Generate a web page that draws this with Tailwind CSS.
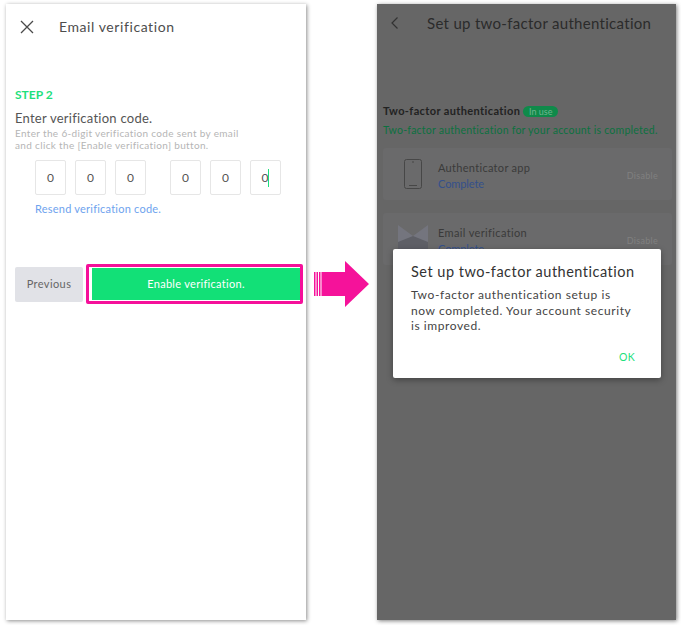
<!DOCTYPE html>
<html lang="en">
<head>
  <meta charset="UTF-8">
  <title>Two-factor authentication setup</title>
  <script src="https://cdn.jsdelivr.net/npm/@tailwindcss/browser@4"></script>
</head>
<body class="bg-white w-[681px] h-[625px] overflow-hidden font-['Lato',sans-serif]">
  <div class="flex pl-[6px] pt-[4px]">

    <!-- left phone -->
    <section class="w-[300px] h-[616px] bg-white shadow-[1px_1px_4px_rgba(0,0,0,0.45)] shrink-0">
      <header class="flex items-center h-[45px] pl-[14px] pt-[1px]">
        <svg class="w-[14px] h-[14px]" viewBox="0 0 14 14" fill="none" stroke="#4a4a4a" stroke-width="1.3"><path d="M1 1l12 12M13 1L1 13"/></svg>
        <h1 class="ml-[25px] text-[14px] leading-none tracking-[0.58px] text-[#4d4d4d]">Email verification</h1>
      </header>
      <div class="pl-[9px] pt-[39px]">
        <p class="text-[12px] leading-[14px] font-bold text-[#1ee07c]">STEP 2</p>
        <p class="mt-[8px] text-[13px] leading-[16px] tracking-[0.25px] text-[#555]">Enter verification code.</p>
        <p class="mt-[1px] text-[10px] leading-[12px] tracking-[0.34px] text-[#b5b5b5]">Enter the 6-digit verification code sent by email<br>and click the [Enable verification] button.</p>
        <div class="flex mt-[9px] ml-[20px]">
          <div class="flex gap-[9px]">
            <span class="w-[31px] h-[35px] flex items-center justify-center border border-[#e6e6e6] rounded-[2px] text-[12px] text-[#555]">0</span>
            <span class="w-[31px] h-[35px] flex items-center justify-center border border-[#e6e6e6] rounded-[2px] text-[12px] text-[#555]">0</span>
            <span class="w-[31px] h-[35px] flex items-center justify-center border border-[#e6e6e6] rounded-[2px] text-[12px] text-[#555]">0</span>
          </div>
          <div class="flex gap-[9px] ml-[24px]">
            <span class="w-[31px] h-[35px] flex items-center justify-center border border-[#e6e6e6] rounded-[2px] text-[12px] text-[#555]">0</span>
            <span class="w-[31px] h-[35px] flex items-center justify-center border border-[#e6e6e6] rounded-[2px] text-[12px] text-[#555]">0</span>
            <span class="w-[31px] h-[35px] flex items-center justify-center border border-[#e6e6e6] rounded-[2px] text-[12px] text-[#555]">0<i class="w-px h-[18px] bg-[#1ee07c]"></i></span>
          </div>
        </div>
        <a class="block mt-[7px] ml-[20px] text-[11px] leading-[14px] tracking-[0.22px] text-[#6ea3ee]">Resend verification code.</a>
        <div class="flex items-center mt-[48px]">
          <button class="w-[68px] h-[35px] bg-[#e1e2e7] rounded-[2px] text-[11px] tracking-[0.4px] text-[#666]">Previous</button>
          <div class="ml-[3px] w-[217px] h-[40px] border-[3px] border-[#f5109a] rounded-[2px] bg-white pl-[3px] py-[1px]">
            <button class="w-[208px] h-[32px] bg-[#12e077] text-[11px] tracking-[0.3px] text-white">Enable verification.</button>
          </div>
        </div>
      </div>
    </section>

    <!-- arrow between phones -->
    <div class="w-[71px] shrink-0 pt-[257px] pl-[8px]">
      <svg width="55" height="46" viewBox="0 0 55 46" fill="#f5129a">
        <path d="M0 11h1.500v24H0zM2.500 11h1.500v24H2.500zM5 11h1.500v24H5zM7.500 11H31V0l24 23-24 23V35H7.500z"/>
      </svg>
    </div>

    <!-- right phone -->
    <section class="relative w-[299px] h-[616px] bg-[#666666] shadow-[1px_1px_4px_rgba(0,0,0,0.5)] shrink-0">
      <header class="flex items-center h-[39px] pl-[14px]">
        <svg class="w-[7px] h-[12px] mb-[1px]" viewBox="0 0 7 12" fill="none" stroke="#333" stroke-width="1.2"><path d="M6.500 0.500L1 6l5.500 5.500"/></svg>
        <h2 class="ml-[29px] text-[15px] leading-none tracking-[0.3px] text-[#2b2b2b]">Set up two-factor authentication</h2>
      </header>
      <div class="pl-[6px] pt-[60px] pr-[4px]">
        <div class="flex items-center">
          <h3 class="text-[11px] leading-[16px] font-bold tracking-[0.38px] text-[#222]">Two-factor authentication</h3>
          <span class="ml-[3px] w-[35px] h-[11px] rounded-full bg-[#0f8a4a] text-[9px] leading-[11px] text-center text-[#6fb58e]">In use</span>
        </div>
        <p class="mt-[4px] text-[10.500px] leading-[14px] tracking-[0.24px] text-[#0c7140]">Two-factor authentication for your account is completed.</p>
        <div class="flex items-center h-[52px] mt-[11px] pt-[4px] bg-[#6a6a6b] rounded-[3px]">
          <svg class="ml-[21px] w-[18px] h-[30px] -mt-[4px]" viewBox="0 0 18 30" fill="none" stroke="#474747"><rect x="0.500" y="0.500" width="17" height="29" rx="2"/><path d="M5 26.500h8M8 3h2"/></svg>
          <div class="ml-[16px] flex-1">
            <p class="text-[11px] leading-[16px] tracking-[0.3px] text-[#3a3a3a]">Authenticator app</p>
            <p class="text-[11px] leading-[16px] tracking-[-0.1px] text-[#34508c]">Complete</p>
          </div>
          <span class="mr-[14px] text-[9px] tracking-[0.3px] text-[#808080]">Disable</span>
        </div>
        <div class="flex items-center h-[52px] mt-[13px] pt-[4px] bg-[#6a6a6b] rounded-[3px]">
          <svg class="ml-[15px] w-[30px] h-[32px]" viewBox="0 0 30 32" fill="#74757e"><path d="M0 0l15 11L30 0v32H0z"/><path d="M0 17l15-6 15 6v15H0z" fill="#5e5f66"/></svg>
          <div class="ml-[10px] flex-1">
            <p class="text-[11px] leading-[16px] tracking-[0.36px] text-[#3a3a3a]">Email verification</p>
            <p class="text-[11px] leading-[16px] tracking-[-0.1px] text-[#34508c]">Complete</p>
          </div>
          <span class="mr-[14px] text-[9px] tracking-[0.3px] text-[#808080]">Disable</span>
        </div>
      </div>

      <!-- dialog -->
      <div class="absolute left-[16px] top-[245px] w-[268px] h-[129px] bg-white rounded-[2px] shadow-[0_2px_6px_rgba(0,0,0,0.35)] pl-[18px] pt-[14px]">
        <h4 class="text-[14.500px] leading-[18px] tracking-[0.5px] text-[#333]">Set up two-factor authentication</h4>
        <p class="mt-[6px] text-[12px] leading-[15.500px] tracking-[0.57px] text-[#444]">Two-factor authentication setup is<br>now completed. Your account security<br>is improved.</p>
        <div class="absolute right-[26px] bottom-[15px] text-[10.500px] leading-[12px] tracking-[0.3px] text-[#1ee07c]">OK</div>
      </div>
    </section>
  </div>
</body>
</html>
